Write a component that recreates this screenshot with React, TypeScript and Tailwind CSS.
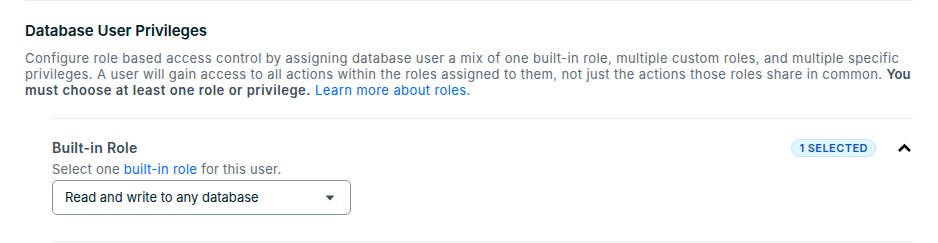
import React from "react";

export default function App() {
  return (
    <div className="w-[938px] h-[243px] bg-white overflow-hidden" style={{ fontFamily: "Inter, 'Liberation Sans', sans-serif" }}>
      <div className="ml-[25px] w-[888px] border-t border-[#e8edeb] pt-[20px]">
        <h2 className="text-[15px] leading-[20px] font-semibold text-[#001e2b]">Database User Privileges</h2>
        <p className="mt-[9px] text-[13px] leading-[16px] tracking-[0.4px] text-[#5c6c75]">
          Configure role based access control by assigning database user a mix of one built-in role, multiple custom roles, and multiple specific privileges. A user will gain access to all actions within the roles assigned to them, not just the actions those roles share in common.{" "}
          <span className="font-semibold text-[#3d4f58] tracking-[0.1px]">You</span>{" "}
          <span className="font-semibold text-[#3d4f58] tracking-[0.55px]">must choose at least one role or privilege.</span>{" "}
          <a className="text-[#016bf8]">Learn more about roles.</a>
        </p>
        <div className="ml-[27px] mt-[20px] border-t border-[#e8edeb] border-b pt-[20px] pb-[26px]">
          <div className="flex items-start justify-between">
            <div>
              <div className="text-[14px] leading-[18px] font-semibold text-[#3d4f58] tracking-[0.3px]">Built-in Role</div>
              <div className="mt-[3px] text-[13px] leading-[18px] text-[#5c6c75] tracking-[0.28px]">
                Select one <a className="text-[#016bf8]">built-in role</a> for this user.
              </div>
            </div>
            <div className="flex items-center gap-[21px] pt-[0px]">
              <span className="h-[18px] px-[7px] rounded-full bg-[#e1f7ff] border border-[#c3e7fe] text-[#1254b7] text-[11px] font-semibold leading-[15px] tracking-[0.45px] uppercase flex items-center">1 Selected</span>
              <svg width="15" height="10" viewBox="0 0 15 10" className="mr-[1px]">
                <path d="M2 8 L7.5 2.5 L13 8" stroke="#000" strokeWidth="2.6" fill="none" />
              </svg>
            </div>
          </div>
          <button className="mt-[2px] w-[299px] h-[35px] rounded-[5px] border border-[#889397] flex items-center justify-between pl-[12px] pr-[15px] text-[13px] text-[#001e2b]">
            <span>Read and write to any database</span>
            <svg width="10" height="6" viewBox="0 0 10 6"><path d="M0.5 0.5 L9.5 0.5 L5 5.5 Z" fill="#3d4f58" /></svg>
          </button>
        </div>
      </div>
    </div>
  );
}
